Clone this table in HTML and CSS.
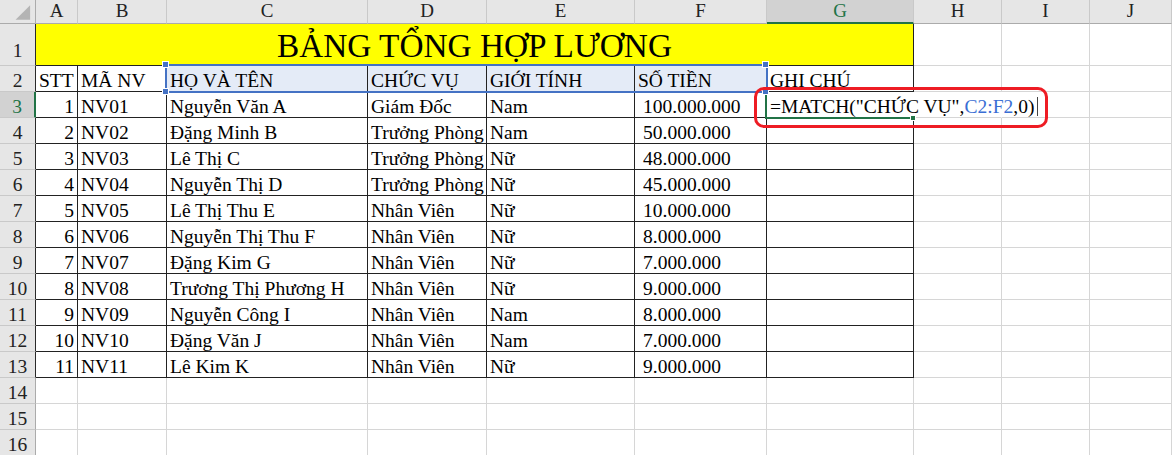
FILE: index.html
```html
<!DOCTYPE html>
<html lang="vi">
<head>
<meta charset="utf-8">
<title>Bảng tổng hợp lương</title>
<link rel="stylesheet" href="styles.css">
</head>
<body>
<div class="sheet">
  <div class="hd corner"><svg width="36" height="24" viewBox="0 0 36 24"><polygon points="31,5 31,20 16,20" fill="#b4b4b4"/></svg></div>
  <div class="hd">A</div><div class="hd">B</div><div class="hd">C</div><div class="hd">D</div><div class="hd">E</div><div class="hd">F</div><div class="hd act">G</div><div class="hd">H</div><div class="hd">I</div><div class="hd">J</div>

  <div class="rh tb r1">1</div>
  <div class="c b title">BẢNG TỔNG HỢP LƯƠNG</div>
  <div class="c"></div><div class="c"></div><div class="c"></div>

  <div class="rh tb">2</div>
  <div class="c b">STT</div><div class="c b">MÃ NV</div><div class="c b sel">HỌ VÀ TÊN</div><div class="c b sel">CHỨC VỤ</div><div class="c b sel">GIỚI TÍNH</div><div class="c b sel">SỐ TIỀN</div><div class="c b">GHI CHÚ</div>
  <div class="c"></div><div class="c"></div><div class="c"></div>

  <div class="rh tb act">3</div>
  <div class="c b r">1</div><div class="c b">NV01</div><div class="c b">Nguyễn Văn A</div><div class="c b">Giám Đốc</div><div class="c b">Nam</div><div class="c b m">100.000.000</div>
  <div class="c b edit">=MATCH("CHỨC VỤ",<span class="ref">C2:F2</span>,0)</div>
  <div class="c ov"></div><div class="c"></div><div class="c"></div>

  <div class="rh tb">4</div>
  <div class="c b r">2</div><div class="c b">NV02</div><div class="c b">Đặng Minh B</div><div class="c b">Trưởng Phòng</div><div class="c b">Nam</div><div class="c b m">50.000.000</div><div class="c b"></div>
  <div class="c"></div><div class="c"></div><div class="c"></div>

  <div class="rh tb">5</div>
  <div class="c b r">3</div><div class="c b">NV03</div><div class="c b">Lê Thị C</div><div class="c b">Trưởng Phòng</div><div class="c b">Nữ</div><div class="c b m">48.000.000</div><div class="c b"></div>
  <div class="c"></div><div class="c"></div><div class="c"></div>

  <div class="rh tb">6</div>
  <div class="c b r">4</div><div class="c b">NV04</div><div class="c b">Nguyễn Thị D</div><div class="c b">Trưởng Phòng</div><div class="c b">Nữ</div><div class="c b m">45.000.000</div><div class="c b"></div>
  <div class="c"></div><div class="c"></div><div class="c"></div>

  <div class="rh tb">7</div>
  <div class="c b r">5</div><div class="c b">NV05</div><div class="c b">Lê Thị Thu E</div><div class="c b">Nhân Viên</div><div class="c b">Nữ</div><div class="c b m">10.000.000</div><div class="c b"></div>
  <div class="c"></div><div class="c"></div><div class="c"></div>

  <div class="rh tb">8</div>
  <div class="c b r">6</div><div class="c b">NV06</div><div class="c b">Nguyễn Thị Thu F</div><div class="c b">Nhân Viên</div><div class="c b">Nữ</div><div class="c b m">8.000.000</div><div class="c b"></div>
  <div class="c"></div><div class="c"></div><div class="c"></div>

  <div class="rh tb">9</div>
  <div class="c b r">7</div><div class="c b">NV07</div><div class="c b">Đặng Kim G</div><div class="c b">Nhân Viên</div><div class="c b">Nữ</div><div class="c b m">7.000.000</div><div class="c b"></div>
  <div class="c"></div><div class="c"></div><div class="c"></div>

  <div class="rh tb">10</div>
  <div class="c b r">8</div><div class="c b">NV08</div><div class="c b">Trương Thị Phương H</div><div class="c b">Nhân Viên</div><div class="c b">Nữ</div><div class="c b m">9.000.000</div><div class="c b"></div>
  <div class="c"></div><div class="c"></div><div class="c"></div>

  <div class="rh tb">11</div>
  <div class="c b r">9</div><div class="c b">NV09</div><div class="c b">Nguyễn Công I</div><div class="c b">Nhân Viên</div><div class="c b">Nam</div><div class="c b m">8.000.000</div><div class="c b"></div>
  <div class="c"></div><div class="c"></div><div class="c"></div>

  <div class="rh tb">12</div>
  <div class="c b r">10</div><div class="c b">NV10</div><div class="c b">Đặng Văn J</div><div class="c b">Nhân Viên</div><div class="c b">Nam</div><div class="c b m">7.000.000</div><div class="c b"></div>
  <div class="c"></div><div class="c"></div><div class="c"></div>

  <div class="rh tb">13</div>
  <div class="c b r">11</div><div class="c b">NV11</div><div class="c b">Lê Kim K</div><div class="c b">Nhân Viên</div><div class="c b">Nữ</div><div class="c b m">9.000.000</div><div class="c b"></div>
  <div class="c"></div><div class="c"></div><div class="c"></div>

  <div class="rh">14</div>
  <div class="c"></div><div class="c"></div><div class="c"></div><div class="c"></div><div class="c"></div><div class="c"></div><div class="c"></div><div class="c"></div><div class="c"></div><div class="c"></div>
  <div class="rh">15</div>
  <div class="c"></div><div class="c"></div><div class="c"></div><div class="c"></div><div class="c"></div><div class="c"></div><div class="c"></div><div class="c"></div><div class="c"></div><div class="c"></div>
  <div class="rh">16</div>
  <div class="c"></div><div class="c"></div><div class="c"></div><div class="c"></div><div class="c"></div><div class="c"></div><div class="c"></div><div class="c"></div><div class="c"></div><div class="c"></div>

  <div class="selbox"></div>
  <div class="handle h-tl"></div>
  <div class="handle h-bl"></div>
  <div class="handle h-tr"></div>
  <div class="handle h-br"></div>
  <div class="actcell"></div>
  <div class="fillhandle"></div>
  <div class="caret"></div>
  <div class="redbox"></div>
</div>
</body>
</html>
```

FILE: styles.css
```css
html, body {
  margin: 0;
  padding: 0;
  background: #ffffff;
  overflow: hidden;
}

.sheet {
  position: relative;
  display: grid;
  grid-template-columns: 36px 42px 89px 201px 119px 148px 132px 147px 88px 88px 82px;
  grid-template-rows: 24px 42px repeat(15, 26px);
  width: 1172px;
  height: 455px;
  overflow: hidden;
  font-family: "Liberation Serif", "Times New Roman", serif;
  font-size: 19.5px;
  color: #000;
}

.sheet > div {
  box-sizing: border-box;
}

.hd {
  display: flex;
  align-items: center;
  justify-content: center;
  background: #e6e6e6;
  border-right: 1px solid #c9c9c9;
  border-bottom: 1px solid #ababab;
  color: #222;
  line-height: 1.1;
  font-size: 19px;
}

.hd.corner {
  padding: 0;
  align-items: stretch;
  justify-content: stretch;
  border-right-color: #ababab;
}

.hd.corner svg {
  display: block;
}

.hd.act {
  background: #d2d2d2;
  color: #217346;
  border-bottom: 2px solid #217346;
}

.rh {
  display: flex;
  align-items: flex-end;
  justify-content: center;
  background: #e6e6e6;
  border-right: 1px solid #ababab;
  border-bottom: 1px solid #c9c9c9;
  color: #222;
  line-height: 1.1;
}

.rh.tb {
  border-right-color: #2a2a2a;
}

.rh.r1 {
  padding-bottom: 4px;
}

.rh.act {
  background: #d2d2d2;
  color: #217346;
  border-right: 2px solid #217346;
}

.c {
  display: flex;
  align-items: flex-end;
  padding: 0 3px;
  white-space: nowrap;
  overflow: hidden;
  line-height: 1.1;
  border-right: 1px solid #d6d6d6;
  border-bottom: 1px solid #d6d6d6;
}

.c.b {
  border-right-color: #222;
  border-bottom-color: #222;
}

.c.r {
  justify-content: flex-end;
}

.c.m {
  padding-left: 8px;
}

.c.sel {
  background: #e4ebf7;
}

.title {
  grid-column: span 7;
  justify-content: center;
  background: #ffff00;
  font-size: 33.3px;
}

.edit {
  overflow: visible;
  position: relative;
  z-index: 2;
  border-right-color: transparent !important;
}

.edit .ref {
  color: #3a6ed4;
}

.ov {
  border-right-color: transparent !important;
}

.selbox {
  position: absolute;
  left: 165px;
  top: 64px;
  width: 603px;
  height: 29px;
  border: 2px solid #4472c4;
  z-index: 3;
}

.handle {
  position: absolute;
  width: 7px;
  height: 7px;
  background: #4472c4;
  border: 1px solid #ffffff;
  z-index: 4;
}

.h-tl { left: 162px; top: 61px; }
.h-bl { left: 162px; top: 88px; }
.h-tr { left: 762px; top: 61px; }
.h-br { left: 762px; top: 88px; }

.actcell {
  position: absolute;
  left: 765px;
  top: 92px;
  width: 149px;
  height: 27px;
  border-left: 2px solid #217346;
  border-bottom: 2px solid #217346;
  z-index: 3;
}

.fillhandle {
  position: absolute;
  left: 910px;
  top: 115px;
  width: 6px;
  height: 6px;
  background: #217346;
  border: 1px solid #ffffff;
  z-index: 4;
}

.caret {
  position: absolute;
  left: 1037px;
  top: 97px;
  width: 1px;
  height: 19px;
  background: #444;
  z-index: 4;
}

.redbox {
  position: absolute;
  left: 754px;
  top: 87px;
  width: 294px;
  height: 41px;
  border: 3px solid #ee1c24;
  border-radius: 10px;
  z-index: 5;
}
```
